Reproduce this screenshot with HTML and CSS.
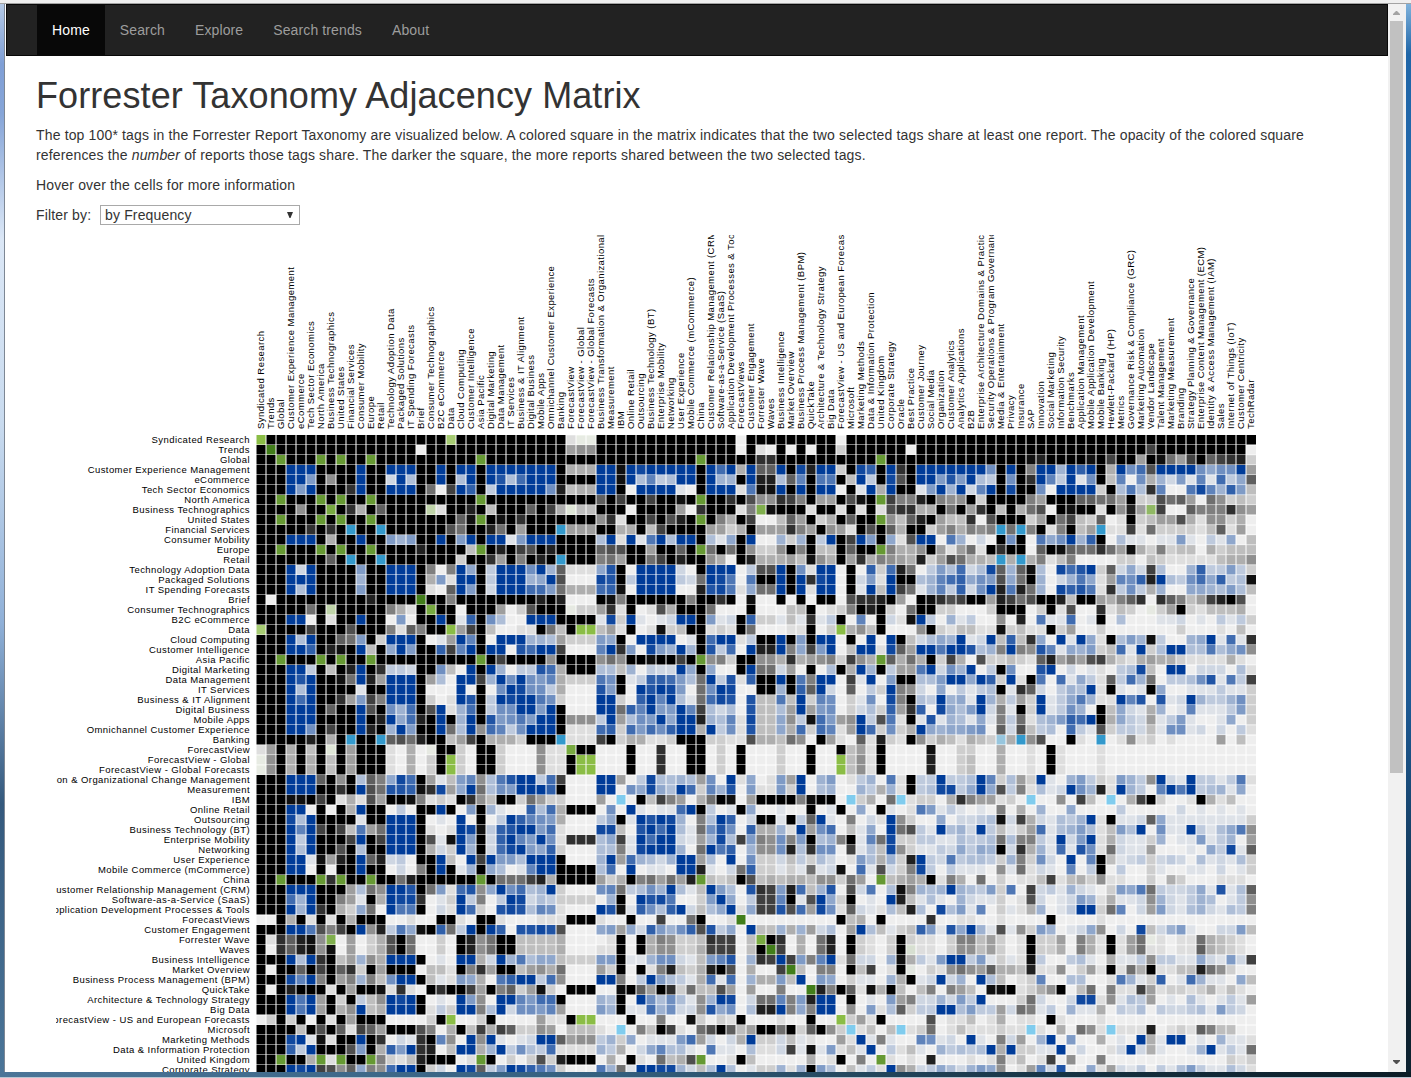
FILE: index.html
```html
<!DOCTYPE html>
<html lang="en">
<head>
<meta charset="utf-8">
<title>Forrester Taxonomy Adjacency Matrix</title>
<link rel="stylesheet" href="styles.css">
</head>
<body>
<div class="window">
  <div class="window-top"></div>
  <div class="window-middle">
    <div class="window-left"></div>
    <main class="viewport">
      <nav class="navbar">
        <a class="nav-link active">Home</a>
        <a class="nav-link">Search</a>
        <a class="nav-link">Explore</a>
        <a class="nav-link">Search trends</a>
        <a class="nav-link">About</a>
      </nav>
      <div class="container">
        <h1>Forrester Taxonomy Adjacency Matrix</h1>
        <p>The top 100* tags in the Forrester Report Taxonomy are visualized below. A colored square in the matrix indicates that the two selected tags share at least one report. The opacity of the colored square<br>references the <em>number</em> of reports those tags share. The darker the square, the more reports shared between the two selected tags.</p>
        <p>Hover over the cells for more information</p>
        <div class="filter">
          <label class="filter-label" for="order">Filter by:</label>
          <div class="select-box">
            <select class="select" id="order"><option>by Frequency</option></select>
            <svg class="select-arrow" width="6" height="6" viewBox="0 0 6 6"><path d="M0 0H6L3.5 6H2.5Z"/></svg>
          </div>
        </div>
        <svg class="matrix" id="matrix" width="1200" height="1200"></svg>
      </div>
    </main>
    <div class="scrollbar">
      <svg class="scroll-arrow up" width="7" height="4" viewBox="0 0 7 4"><path d="M3 0H4L7 3V4H0V3Z"/></svg>
      <div class="scroll-thumb"></div>
      <svg class="scroll-arrow down" width="7" height="4" viewBox="0 0 7 4"><path d="M0 0H7V1L4 4H3L0 1Z"/></svg>
    </div>
    <div class="window-right"></div>
  </div>
  <div class="window-bottom"></div>
</div>
<script src="matrix.js"></script>
</body>
</html>
```
FILE: styles.css
```css
* { box-sizing: border-box; }

body {
  margin: 0;
  overflow: hidden;
  font: 14px/20px "Liberation Sans", Arial, sans-serif;
  letter-spacing: 0.155px;
  color: #333;
}

.window {
  display: flex;
  flex-direction: column;
  width: 1411px;
  height: 1078px;
}

.window-top {
  height: 4px;
  background: #efefef;
  border-bottom: 1px solid #a3a3a3;
}

.window-middle {
  display: flex;
  flex: 1;
  min-height: 0;
}

.window-left {
  width: 5px;
  border-right: 1px solid #7d8794;
  background: linear-gradient(#b4c9e6 0, #7f9fd6 60px, #86a5d8 110px, #dbe7f6 235px, #c9dbef 420px, #8fb0d8 620px, #34597d 800px, #4b7598 100%);
}

.window-right {
  width: 5px;
  background: linear-gradient(#7fb2dc 0, #1f66a8 50px, #2a6db0 300px, #1d5a94 700px, #0d2230 1000px);
}

.window-bottom {
  height: 6px;
  border-bottom: 1px solid #b9c7d3;
  background: linear-gradient(90deg, #4b7598 0, #35607f 600px, #14303f 1100px, #0c1c26 100%);
}

.viewport {
  flex: 1;
  min-width: 0;
  overflow: hidden;
  padding-left: 1px;
  background: #fff;
}

.navbar {
  display: flex;
  height: 52px;
  padding-left: 30px;
  border: 1px solid #080808;
  background: #222;
  letter-spacing: 0.12px;
}

.nav-link {
  padding: 15px;
  color: #9d9d9d;
}

.nav-link.active {
  background: #080808;
  color: #fff;
}

.container { padding: 20px 0 0 30px; }

h1 {
  margin: 0 0 9px;
  font-size: 36px;
  line-height: 40px;
  font-weight: normal;
  letter-spacing: 0.09px;
}

p {
  margin: 0 0 10px;
  white-space: nowrap;
}

.filter {
  display: flex;
  align-items: center;
  height: 20px;
  margin-bottom: 10px;
}

.filter-label { width: 64px; }

.select-box {
  position: relative;
  width: 200px;
  height: 20px;
}

.select {
  width: 100%;
  height: 20px;
  padding: 0 4px;
  appearance: none;
  border: 1px solid #a9a9a9;
  border-radius: 0;
  background: #fff;
  color: #333;
  font: 14px/18px "Liberation Sans", Arial, sans-serif;
  letter-spacing: 0.155px;
}

.select-arrow {
  position: absolute;
  top: 7px;
  right: 7px;
  fill: #333;
}

.matrix {
  display: block;
  margin-left: 20px;
  overflow: hidden;
}

.matrix text {
  font-size: 9.5px;
  letter-spacing: 0.43px;
  fill: #000;
}

.row-label { text-anchor: end; }

.grid-line { stroke: #fff; }

.matrix-back { fill: #eee; }

.scrollbar {
  display: flex;
  flex-direction: column;
  align-items: center;
  width: 18px;
  padding: 7px 1px 8px 0;
  background: #f1f1f1;
}

.scroll-arrow.up { fill: #a3a3a3; }

.scroll-arrow.down {
  margin-top: auto;
  fill: #505050;
}

.scroll-thumb {
  width: 13px;
  height: 752px;
  margin-top: 6px;
  background: #c1c1c1;
}
```
FILE: matrix.js
```js
// Each tag belongs to one group; a pair inside one group takes that group's colour.
const groups = {
  t: [0, 60, 153],
  a: [139, 189, 70],
  b: [66, 126, 26],
  r: [102, 153, 51],
  d: [120, 170, 65],
  i: [51, 153, 204],
  v: [128, 204, 238]
};

const tags = `a|Syndicated Research
b|Trends
r|Global
t|Customer Experience Management
t|eCommerce
t|Tech Sector Economics
r|North America
d|Business Technographics
r|United States
i|Financial Services
t|Consumer Mobility
r|Europe
i|Retail
t|Technology Adoption Data
t|Packaged Solutions
t|IT Spending Forecasts
b|Brief
d|Consumer Technographics
t|B2C eCommerce
a|Data
t|Cloud Computing
t|Customer Intelligence
r|Asia Pacific
t|Digital Marketing
t|Data Management
t|IT Services
t|Business & IT Alignment
t|Digital Business
t|Mobile Apps
t|Omnichannel Customer Experience
i|Banking
d|ForecastView
a|ForecastView - Global
a|ForecastView - Global Forecasts
t|Business Transformation & Organizational Change Management
t|Measurement
v|IBM
t|Online Retail
t|Outsourcing
t|Business Technology (BT)
t|Enterprise Mobility
t|Networking
t|User Experience
t|Mobile Commerce (mCommerce)
r|China
t|Customer Relationship Management (CRM)
t|Software-as-a-Service (SaaS)
t|Application Development Processes & Tools
b|ForecastViews
t|Customer Engagement
d|Forrester Wave
b|Waves
t|Business Intelligence
b|Market Overview
t|Business Process Management (BPM)
b|QuickTake
t|Architecture & Technology Strategy
t|Big Data
a|ForecastView - US and European Forecasts
v|Microsoft
t|Marketing Methods
t|Data & Information Protection
r|United Kingdom
t|Corporate Strategy
v|Oracle
b|Best Practice
t|Customer Journey
t|Social Media
t|Organization
t|Customer Analytics
t|Analytics Applications
t|B2B
t|Enterprise Architecture Domains & Practices
t|Security Operations & Program Governance
i|Media & Entertainment
t|Privacy
i|Insurance
v|SAP
t|Innovation
t|Social Marketing
t|Information Security
t|Benchmarks
t|Application Management
t|Mobile Application Development
i|Mobile Banking
v|Hewlett-Packard (HP)
t|Metrics
t|Governance Risk & Compliance (GRC)
t|Marketing Automation
d|Vendor Landscape
t|Talent Management
t|Marketing Measurement
t|Branding
t|Strategy Planning & Governance
t|Enterprise Content Management (ECM)
t|Identity & Access Management (IAM)
t|Sales
t|Internet of Things (IoT)
t|Customer Centricity
b|TechRadar`.split("\n").map(line => {
  const [group, name] = line.split("|");
  return { group, name };
});

// Shared report strength, one hex digit per pair, from the diagonal to the right.
// The blocks of a row end at columns 33, 66 and 99.
const weights = `fffffffffffffffffffbfffffffffff111 ffffffffffffff0fffffffff0ffffffff fffffffffffffffffffffffffffffffff
fffffffffffffff0ffffffffffffff566 ffffffffffffff0f10f0f0ff2ffffff0f ffffffffffffffffffffffbfffffffff0
ffffffffffffffffffffffffffffffff ffffffffffffffffccfffffffffffffff ffffffffffedffffefbff5fe85bf9bcd2
ffffffffffffffffffffffffffff444 ffefefffffffbf4f99ffedff2fecffcff ffffff8fff7ff5fcff4f8baffff8688f5
f7f6fffff2f4ffff4fffd4bfffffff ffef4934ffff55ffdd499faaf3f3feaff f7d7f43f8fcf93f18f39084527191b369
fffffcfffffff80bfcf3fffff8d344 fff0ffff10ffff1aeeffffff0f1f4fff1 7f5f29ffeff80ffff2f4a4c900ae95c73
ffffffffffffffffffffffffffff 9fbffbffeffffcfa66cb7f55faeffb77d f766f2ffff75fff99885f22a895086232
ffc4f9ffff61ffdf3fff9fb4233 fff0ffff50cfff17eefff1ff1f1f1acc4 4f8f5cf3f48a0feff1f6d5cb009777c65
ffffffffffff9effefcfffffff 6c1ffbfadfff74fb00395f24f9fff639d f533c0afff25f8b32901f2355a4166240
ffffffffffa8ffd8f5ffff555 ff44f3bffff5524f555c75f651faf94ff 2574767f8f7f17f35f11b182222139150
fff757ffff7ffff17fffffff 4f1f1af4fff416ff00525f3ffbf7f61af f0a5020f8f0a68f5cf041101171031603
fffffdffff3ffdfbafdffff 9aaff5ff9ff8f8f6226f7f33f9fff7446 f51581fcff09fe988c85e427233042333
ffffffff2ffc5f7fdfffff 785ff8bfdff640fd44453e64f5c47654d 25a8443f4f47137000022032111113446
ffff707f6f3fff8f59111 6df0ffff20ffff03aaff81ff0f0c2bd80 374b24e959e40ebdf29262b4005c33732
fff471fff3fff56fa000 edf3ffff328fea0afffffcef0f271fff4 59bc687a68f5025a61598cdf438b6c34e
ff109f7f2fffbb78444 bce0ffff00ddea1688fff1ff0f1f3fb81 593c28fdad850ecda1c38345006654743
fff7ffffffffdfd000 fe7ffffff7ffcf0e00f0f0ff0accdf50f ecabff5db8affd3ff5479c0c9735bdfa0
fff0fff502afff122 5c1f01a4fff8000f00033f0127fdf208f f220002fff02f1a00c1320125f2133340
ff1cf8400fffffff 1e2f1012fff712fc22131c13f090f21ef 305130060d0a11b01f040001120103132
f5bf30011f83fff 351f01e23ff121f800011f02f463f0006 f213311e2311f25002000000020001030
f9f0fff5545222 76f0ffff01fbff13ffff7fff0f0f0ff32 465f12f3c3c60f1f61f475e30056f1b1c
ffff0dbffb000 9fc70e75f5fd3b0fddf76b7f03ff1e95f faffd457f76d9165723b1f24ff44a4686
ffbffff6ffff 686ffeffbff672ff664c45672b64f9484 f2b40a223219d575ab421454421111410
f5033db4fff 44350322f6f600ff88250f04f4f5f355a f285f03f800df02011034e30ff0222041
f8f8794222 a8f13ccb748f3d1cffffa7ff0b1f07ff4 47ff6fc2f1fa0b163193b5803348d1a3b
fe8834000 d7f0fdfe7088fe00ff5fc9f209032f762 0603134f1c920354f1f101f6001113112
ffa82000 ff20cf9f418bed0d33a3f29802180e7f4 3f561f54352f136a511f9d0d12f533582
f7ff000 ff8c9f77f9b4240d3345f57802242c5cc 0e647f271f2f13850f362145019111372
fff666 3f5487f6ffd5491e33663eb756f3aa1f1 d1541617381457cbff463251371001602
ff111 bc2b7b8cff4f381d3364b2b915fb2824f 656678092a3340b31a233231881202031
f111 bf244112fff2211a443860f51091d21f6 243143274f6a00f10f016120100005030
fff 000f00c00ff020f000200f00f351f0000 e00220040010f10001000000000000000
ff 000f00c00ff020f000200f00f361f0000 d00230040010f10001000000000000000
f 000f00c00ff020f000200f00f361f0000 d00230040010f10001000000000000000
ff503e4454580f160175f05701350a1f3 3f334f92452f10573217536f21f3313a1
f086e64fb295d071172f0450053451f3 4ee36f6a371412f85d1f5309faf345160
f0f3b75048fe05ffff7eff0f2408f12 204c755120f0060b30f04bf2001f41300
f1011bff301f600100f01f060f101a 713101070405006000030000020101010
fdfe5074fc02ff1f39f107021f620 0602234e2b421435f1f11296111111112
fbf4188d80c4451f58b03160f8a3 1f452f33125b145741374f0811f3146a6
ff2155e4b776877f457f198e223 3114334847731f27f1421125011713505
f508fac05668d4c880b143e621 1326365f2c451b1d81821150001063e19
ff540f08222332420174452df 32a34432572820f09f312322320412142
fd1028c22121812e0b1a227e 30311106181210903f030021001102012
f323fa343443662850f3454 f17408020113b13426110020420001110
f740dcb7db35d0a2a04e75 45f54372a0b2315210276a8322361d149
f603bb9f1af62f010fd31 4105211201a2012751411265213540136
f16bbdab5e81921143d4 0e4719021145013ff2890257214521437
f000000000f340f0000 c00110010000f00001000000000000000
f3354552405f43123c 71d6f51a1627501266020e32571002273
ffc0408d0f2102f21 1027735201f2250741f15811011843210
fb0408d0f2102f21 1026635201f2240741f15811011943210
fb779f182205e43 17ff371211e300341041136331162172b
f30770f3b01f10 2168659443d1160251f184f1133d86200
f0760211054f1 2f250f4301290044001a512c01b511063
fd7f91e4f303 707530eef1246f0380711b51221241310
ff0f0107572 25273f000282002ee1614350104101315
f060714921 33ff473352871305114032403223417320
f251f0000 a01130140110f10001000000000000000
f1303f12 8013111211f1040861f111d0121973300
f171009 8120f1072505f07004010f41ff0105111
f03131 053434f4f2211f020012f2410015f1318
f1010 d00010171301b06007000000000000212
f642 3642576601592d0061521303147311421`.split("\n");

const ends = [33, 66, 99];
const level = tags.map(() => []);
weights.forEach((line, row) => {
  const blocks = line.split(" ");
  blocks.forEach((block, b) => {
    const end = ends[b + 3 - blocks.length];
    const first = end - block.length + 1;
    [...block].forEach((digit, k) => {
      const col = first + k;
      if (col < row) return;
      level[row][col] = parseInt(digit, 16);
      level[col][row] = level[row][col];
    });
  });
});

const cell = 10;
const size = tags.length * cell;
const escapeText = text => text.replace(/&/g, "&amp;");
const out = [`<g transform="translate(200 200)"><rect class="matrix-back" width="${size}" height="${size}"/>`];

tags.slice(0, weights.length).forEach((tag, row) => {
  const y = row * cell;
  out.push(`<line class="grid-line" x1="0" x2="${size}" y1="${y}" y2="${y}"/>`);
  tags.forEach((other, col) => {
    const value = level[row][col];
    if (!value) return;
    const rgb = tag.group === other.group ? groups[tag.group] : [0, 0, 0];
    out.push(`<rect x="${col * cell}" y="${y}" width="${cell}" height="${cell}" fill="rgb(${rgb})" fill-opacity="${(value / 15).toFixed(3)}"/>`);
  });
  out.push(`<text class="row-label" x="-6" y="${y + 5}" dy=".32em">${escapeText(tag.name)}</text>`);
});

tags.forEach((tag, col) => {
  out.push(`<g transform="translate(${col * cell} 0) rotate(-90)"><line class="grid-line" x1="${-size}" x2="0"/><text class="col-label" x="6" y="5" dy=".32em">${escapeText(tag.name)}</text></g>`);
});

out.push("</g>");
document.getElementById("matrix").innerHTML = out.join("");
```
